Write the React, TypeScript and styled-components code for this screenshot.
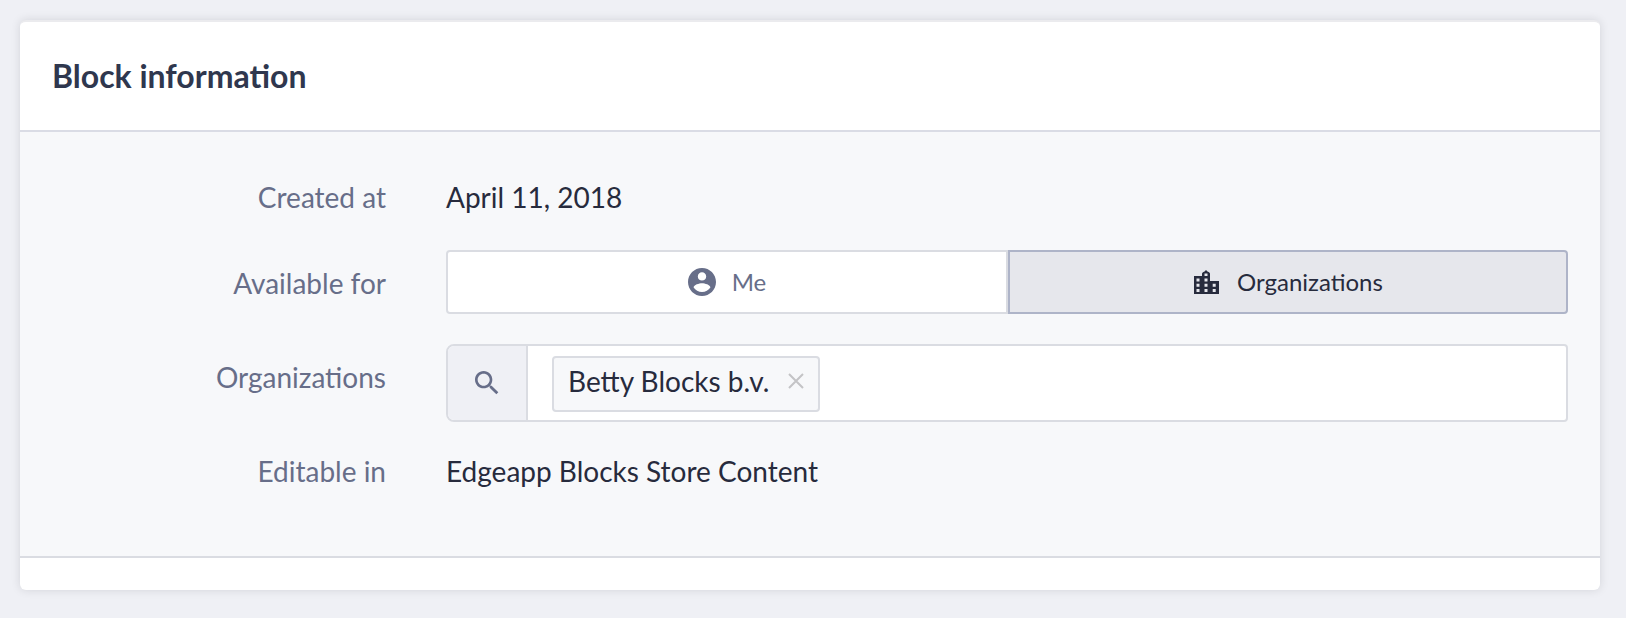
import React from "react";
import styled, { createGlobalStyle, css } from "styled-components";

const GlobalStyle = createGlobalStyle`
  * { box-sizing: border-box; }
  body {
    margin: 0;
    background: #eff0f5;
    color: #272b3d;
    font-family: Lato, "Liberation Sans", sans-serif;
    font-size: 28px;
    line-height: 36px;
  }
`;

const Page = styled.main`
  padding: 20px 26px 28px 20px;
`;

const Card = styled.section`
  overflow: hidden;
  border-top: 2px solid #ebebee;
  border-radius: 6px;
  background: #fff;
  box-shadow: 0 0 10px rgba(30, 30, 36, 0.13);
`;

const CardHeader = styled.header`
  padding: 34px 32px;
  border-bottom: 2px solid #dadce5;
`;

const Title = styled.h2`
  margin: 0;
  color: #2f374e;
  font-size: 32px;
  font-weight: 700;
  line-height: 40px;
`;

const CardBody = styled.form`
  display: flex;
  flex-direction: column;
  gap: 16px;
  padding: 32px 32px 48px;
  background: #f7f8fa;
`;

const CardFooter = styled.footer`
  height: 34px;
  border-top: 2px solid #dadce2;
`;

const Row = styled.div`
  display: grid;
  grid-template-columns: 334px 1fr;
  column-gap: 60px;
  align-items: start;
`;

const Label = styled.label`
  color: #676e89;
  line-height: 66px;
  text-align: right;
`;

const Value = styled.output`
  padding-bottom: 4px;
  line-height: 66px;
`;

const ButtonGroup = styled.div`
  display: grid;
  grid-template-columns: calc(50% + 1px) 1fr;
  margin-bottom: 14px;
`;

const ToggleButton = styled.button<{ $active?: boolean }>`
  display: flex;
  align-items: center;
  justify-content: center;
  gap: 16px;
  height: 64px;
  padding: 0 16px;
  border: 2px solid #dadce2;
  border-radius: 4px 0 0 4px;
  background: #fff;
  color: #676e89;
  font-family: inherit;
  font-size: 24px;
  line-height: 32px;
  cursor: pointer;

  ${({ $active }) =>
    $active &&
    css`
      border-color: #aeb4c8;
      border-radius: 0 4px 4px 0;
      background: #e6e7ec;
      color: #272b3d;
    `}
`;

const SearchField = styled.div`
  display: flex;
  height: 78px;
  border: 2px solid #dadce2;
  border-radius: 8px 4px 4px 8px;
  background: #fff;
  overflow: hidden;
`;

const SearchAddon = styled.span`
  display: flex;
  align-items: center;
  justify-content: center;
  width: 80px;
  border-right: 2px solid #dadce2;
  background: #eff0f5;
  color: #676e89;
`;

const FieldContent = styled.div`
  display: flex;
  flex: 1;
  align-items: flex-start;
  gap: 12px;
  padding: 10px 24px 8px;
`;

const Tag = styled.span`
  display: flex;
  align-items: center;
  gap: 19px;
  height: 56px;
  padding: 0 14px 6px;
  border: 2px solid #dadce2;
  border-radius: 4px;
  background: #f7f8fa;
  white-space: nowrap;
`;

const RemoveButton = styled.button`
  display: flex;
  padding: 0;
  border: 0;
  background: none;
  color: #c4c4c6;
  cursor: pointer;
`;

const SearchInput = styled.input`
  flex: 1;
  min-width: 0;
  height: 56px;
  border: 0;
  outline: 0;
  background: transparent;
  color: inherit;
  font: inherit;
`;

const AccountIcon = () => (
  <svg width="28" height="28" viewBox="2 2 20 20" fill="currentColor" aria-hidden="true">
    <path d="M12 2C6.48 2 2 6.48 2 12s4.48 10 10 10 10-4.48 10-10S17.52 2 12 2zm0 3c1.66 0 3 1.34 3 3s-1.34 3-3 3-3-1.34-3-3 1.34-3 3-3zm0 14.2c-2.5 0-4.71-1.28-6-3.22.03-1.99 4-3.08 6-3.08 1.99 0 5.97 1.09 6 3.08-1.29 1.94-3.5 3.22-6 3.22z" />
  </svg>
);

const CityIcon = () => (
  <svg width="28" height="28" viewBox="0 0 28 28" fill="currentColor" aria-hidden="true">
    <path
      fillRule="evenodd"
      d="M1 8h8V5.500Q9.500 4 11.500 3.500L13 2l1.500 1.500Q16.500 4 17 5.500V13h9v13H1zM3.500 10.500v3h3v-3zM3.500 15.700v3h3v-3zM3.500 21v3h3v-3zM11.500 5.500v2.500h3V5.500zM11.500 10.500v3h3v-3zM11.500 15.700v3h3v-3zM11.500 21v3h3v-3zM19.700 15.700v3h3v-3zM19.700 21v3h3v-3z"
    />
  </svg>
);

const SearchIcon = () => (
  <svg width="32" height="32" viewBox="0 0 24 24" fill="currentColor" aria-hidden="true">
    <path d="M15.5 14h-.79l-.28-.27C15.41 12.59 16 11.11 16 9.5 16 5.91 13.09 3 9.5 3S3 5.91 3 9.5 5.91 16 9.5 16c1.61 0 3.09-.59 4.23-1.57l.27.28v.79l5 4.99L20.49 19l-4.99-5zm-6 0C7.01 14 5 11.99 5 9.5S7.01 5 9.5 5 14 7.01 14 9.5 11.99 14 9.5 14z" />
  </svg>
);

const CloseIcon = () => (
  <svg width="16" height="16" viewBox="0 0 16 16" fill="none" stroke="currentColor" strokeWidth="2" aria-hidden="true">
    <path d="M1 1l14 14M15 1L1 15" />
  </svg>
);

export default function App() {
  return (
    <>
      <GlobalStyle />
      <Page>
        <Card>
          <CardHeader>
            <Title>Block information</Title>
          </CardHeader>
          <CardBody>
            <Row>
              <Label htmlFor="created">Created at</Label>
              <Value id="created">April 11, 2018</Value>
            </Row>
            <Row>
              <Label as="span" id="available">Available for</Label>
              <ButtonGroup role="group" aria-labelledby="available">
                <ToggleButton type="button" aria-pressed="false">
                  <AccountIcon />
                  Me
                </ToggleButton>
                <ToggleButton type="button" aria-pressed="true" $active>
                  <CityIcon />
                  Organizations
                </ToggleButton>
              </ButtonGroup>
            </Row>
            <Row>
              <Label htmlFor="organizations">Organizations</Label>
              <SearchField>
                <SearchAddon>
                  <SearchIcon />
                </SearchAddon>
                <FieldContent>
                  <Tag>
                    Betty Blocks b.v.
                    <RemoveButton type="button" aria-label="Remove Betty Blocks b.v.">
                      <CloseIcon />
                    </RemoveButton>
                  </Tag>
                  <SearchInput id="organizations" type="text" />
                </FieldContent>
              </SearchField>
            </Row>
            <Row>
              <Label htmlFor="editable">Editable in</Label>
              <Value id="editable">Edgeapp Blocks Store Content</Value>
            </Row>
          </CardBody>
          <CardFooter />
        </Card>
      </Page>
    </>
  );
}
